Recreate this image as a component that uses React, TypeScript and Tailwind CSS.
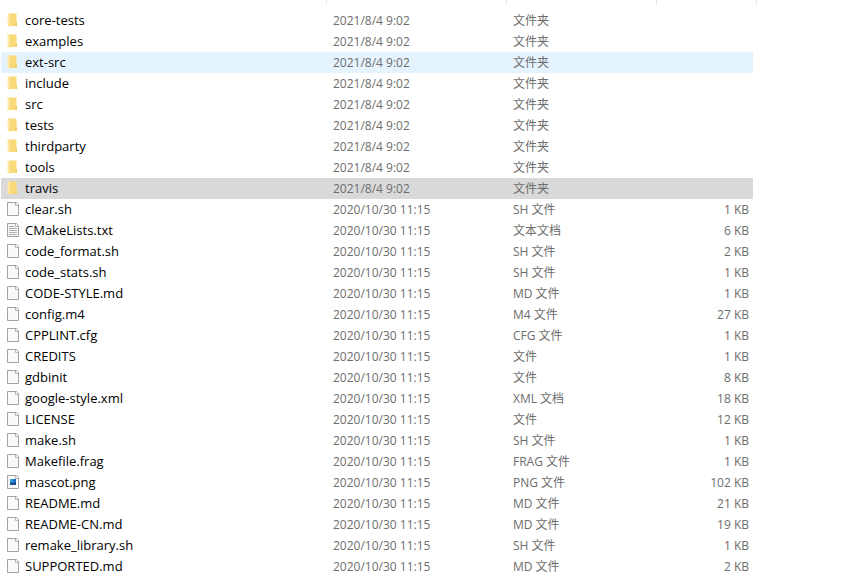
type Kind = "folder" | "file" | "text" | "image";

interface Entry {
  name: string;
  modified: string;
  type: string;
  size?: string;
  kind: Kind;
  state?: "hover" | "selected";
}

const FOLDER_DATE = "2021/8/4 9:02";
const FILE_DATE = "2020/10/30 11:15";

const folder = (name: string, state?: Entry["state"]): Entry => ({
  name,
  modified: FOLDER_DATE,
  type: "文件夹",
  kind: "folder",
  state,
});

const file = (name: string, type: string, size: string, kind: Kind = "file"): Entry => ({
  name,
  modified: FILE_DATE,
  type,
  size,
  kind,
});

const entries: Entry[] = [
  folder("core-tests"),
  folder("examples"),
  folder("ext-src", "hover"),
  folder("include"),
  folder("src"),
  folder("tests"),
  folder("thirdparty"),
  folder("tools"),
  folder("travis", "selected"),
  file("clear.sh", "SH 文件", "1 KB"),
  file("CMakeLists.txt", "文本文档", "6 KB", "text"),
  file("code_format.sh", "SH 文件", "2 KB"),
  file("code_stats.sh", "SH 文件", "1 KB"),
  file("CODE-STYLE.md", "MD 文件", "1 KB"),
  file("config.m4", "M4 文件", "27 KB"),
  file("CPPLINT.cfg", "CFG 文件", "1 KB"),
  file("CREDITS", "文件", "1 KB"),
  file("gdbinit", "文件", "8 KB"),
  file("google-style.xml", "XML 文档", "18 KB"),
  file("LICENSE", "文件", "12 KB"),
  file("make.sh", "SH 文件", "1 KB"),
  file("Makefile.frag", "FRAG 文件", "1 KB"),
  file("mascot.png", "PNG 文件", "102 KB", "image"),
  file("README.md", "MD 文件", "21 KB"),
  file("README-CN.md", "MD 文件", "19 KB"),
  file("remake_library.sh", "SH 文件", "1 KB"),
  file("SUPPORTED.md", "MD 文件", "2 KB"),
];

function EntryIcon({ kind }: { kind: Kind }) {
  if (kind === "folder") {
    return (
      <svg width="16" height="17" viewBox="0 0 16 17" aria-hidden="true" className="shrink-0">
        <path d="M3 1.500h8.500V10h.5v4H4z" fill="#f9d978" />
        <path d="M10.500 10.500H12V14h-1.500z" fill="#f0c963" />
        <path d="M2.500 1.500 5 2v11l-.5 2L2.500 13.500z" fill="#ffe8a2" />
        <path d="M5.250 2.500V13l-.75 1.500" fill="none" stroke="#f3d27b" strokeWidth="0.500" />
      </svg>
    );
  }
  return (
    <svg width="16" height="17" viewBox="0 0 16 17" aria-hidden="true" className="shrink-0">
      <path d="M2.500 1.500h9l2 2v11h-11z" fill="#f9f9f9" stroke="#a3a3a3" />
      <path d="M10.500 2v2.500H13" fill="none" stroke="#b5b5b5" />
      {kind === "text" && (
        <path d="M4 4.500h5M4 6.500h8M4 8.500h8M4 10.500h8M4 12.500h8" stroke="#b0b0b0" />
      )}
      {kind === "image" && (
        <>
          <path d="M5 5h6v6H5z" fill="#1673c4" />
          <path d="M5 5h3v3H5z" fill="#38a0dc" />
          <path d="M5 9.500 8 9l3-1v3H5z" fill="#164e8c" />
        </>
      )}
    </svg>
  );
}

const rowTone = { hover: "bg-[#e5f3ff]", selected: "bg-[#d9d9d9]" };

export default function App() {
  return (
    <main className="min-h-screen overflow-x-auto bg-white font-['Open_Sans','Noto_Sans_CJK_SC',sans-serif] text-xs text-[#6d6d6d]">
      <div aria-hidden="true" className="mb-1.5 flex h-1">
        <span className="w-[327px] shrink-0 border-r border-[#e5e5e5]" />
        <span className="w-[180px] shrink-0 border-r border-[#e5e5e5]" />
        <span className="w-[150px] shrink-0 border-r border-[#e5e5e5]" />
        <span className="w-[100px] shrink-0 border-r border-[#e5e5e5]" />
      </div>
      <table aria-label="Files" className="ml-px w-[752px] table-fixed border-collapse">
        <colgroup>
          <col className="w-[325px]" />
          <col className="w-[180px]" />
          <col className="w-[150px]" />
          <col />
        </colgroup>
        <tbody>
          {entries.map((e) => (
            <tr key={e.name} className={e.state && rowTone[e.state]}>
              <td className="p-0 pl-1 text-[13px] leading-[21px] text-black">
                <span className="flex h-[21px] items-center gap-1">
                  <EntryIcon kind={e.kind} />
                  {e.name}
                </span>
              </td>
              <td className="h-[21px] p-0 pl-[7px] leading-[21px]">{e.modified}</td>
              <td className="h-[21px] p-0 pl-[7px] leading-[21px]">{e.type}</td>
              <td className="h-[21px] p-0 pr-1 text-right leading-[21px]">{e.size}</td>
            </tr>
          ))}
        </tbody>
      </table>
    </main>
  );
}
